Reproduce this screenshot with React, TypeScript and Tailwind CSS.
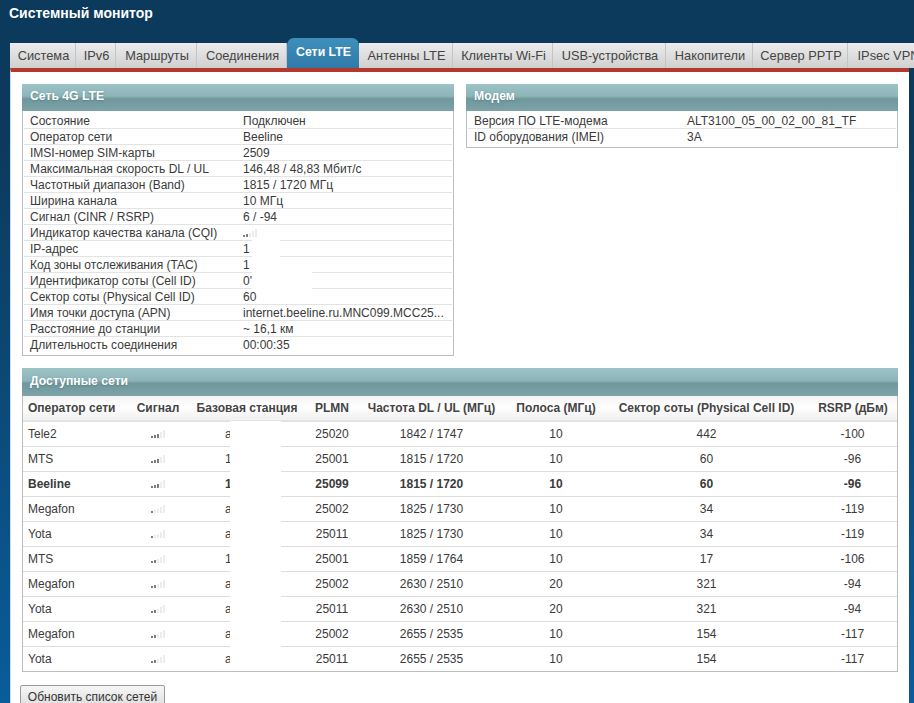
const tabs = [
  { label: "Система", width: "w-[66px]" },
  { label: "IPv6", width: "w-[40px]" },
  { label: "Маршруты", width: "w-[81px]" },
  { label: "Соединения", width: "w-[90px]" },
  { label: "Сети LTE", width: "w-[72px]", active: true },
  { label: "Антенны LTE", width: "w-[94px]" },
  { label: "Клиенты Wi-Fi", width: "w-[100px]" },
  { label: "USB-устройства", width: "w-[113px]" },
  { label: "Накопители", width: "w-[87px]" },
  { label: "Сервер PPTP", width: "w-[95px]" },
  { label: "IPsec VPN", width: "w-[80px]" },
];

const lteRows = [
  ["Состояние", "Подключен"],
  ["Оператор сети", "Beeline"],
  ["IMSI-номер SIM-карты", "2509"],
  ["Максимальная скорость DL / UL", "146,48 / 48,83 Мбит/с"],
  ["Частотный диапазон (Band)", "1815 / 1720 МГц"],
  ["Ширина канала", "10 МГц"],
  ["Сигнал (CINR / RSRP)", "6 / -94"],
  ["Индикатор качества канала (CQI)", "signal"],
  ["IP-адрес", "1"],
  ["Код зоны отслеживания (TAC)", "1"],
  ["Идентификатор соты (Cell ID)", "0'"],
  ["Сектор соты (Physical Cell ID)", "60"],
  ["Имя точки доступа (APN)", "internet.beeline.ru.MNC099.MCC25..."],
  ["Расстояние до станции", "~ 16,1 км"],
  ["Длительность соединения", "00:00:35"],
];

const networks = [
  ["Tele2", 3, "a", "25020", "1842 / 1747", "10", "442", "-100"],
  ["MTS", 3, "1", "25001", "1815 / 1720", "10", "60", "-96"],
  ["Beeline", 3, "1", "25099", "1815 / 1720", "10", "60", "-96"],
  ["Megafon", 1, "a", "25002", "1825 / 1730", "10", "34", "-119"],
  ["Yota", 1, "a", "25011", "1825 / 1730", "10", "34", "-119"],
  ["MTS", 2, "1", "25001", "1859 / 1764", "10", "17", "-106"],
  ["Megafon", 2, "a", "25002", "2630 / 2510", "20", "321", "-94"],
  ["Yota", 2, "a", "25011", "2630 / 2510", "20", "321", "-94"],
  ["Megafon", 2, "a", "25002", "2655 / 2535", "10", "154", "-117"],
  ["Yota", 2, "a", "25011", "2655 / 2535", "10", "154", "-117"],
] as const;

const cardHeader =
  "h-[27px] flex items-center pl-[8px] pb-[2px] text-[12.2px] font-bold text-white [text-shadow:0_1px_2px_#5d8287] bg-[linear-gradient(#9cc4c7_0%,#8db5b9_45%,#6f979c_55%,#7da3a8_100%)]";

function SignalBars({ level }: { level: number }) {
  const heights = [2, 3, 4, 6, 8];
  return (
    <svg width="15" height="8" viewBox="0 0 15 8" className="block">
      {heights.map((h, i) => (
        <rect key={i} x={i * 3} y={8 - h} width="2" height={h} fill={i < level ? "#7d7d7d" : "#e8eded"} />
      ))}
    </svg>
  );
}

function InfoRow({ label, value, last }: { label: string; value: string; last: boolean }) {
  return (
    <div className={`h-[16px] mx-[1px] flex items-center pl-[6px] leading-[16px] ${last ? "" : "border-b border-[#e3e3e3]"}`}>
      <span className="w-[213px]">{label}</span>
      {value === "signal" ? <SignalBars level={2} /> : <span>{value}</span>}
    </div>
  );
}

export default function App() {
  return (
    <div className="h-[703px] overflow-hidden bg-[linear-gradient(#0c3a5c_0%,#0c3a5c_20%,#0a5c9a_100%)] font-['Liberation_Sans',Arial,sans-serif] text-[12px] text-[#3a3a3a]">
      <div className="h-[38px] pl-[9px] pt-[5px] text-[14px] leading-[17px] font-bold text-white">Системный монитор</div>

      <div className="ml-[10px] h-[30px] flex items-end">
        {tabs.map((tab) =>
          tab.active ? (
            <div
              key={tab.label}
              className={`${tab.width} h-[30px] shrink-0 flex items-center justify-center rounded-t-[7px] pb-[2px] pl-[1px] text-[12.3px] font-bold text-white bg-[linear-gradient(#3f8fbd,#2f7aa8)]`}
            >
              {tab.label}
            </div>
          ) : (
            <div
              key={tab.label}
              className={`${tab.width} h-[25px] shrink-0 flex items-center justify-center pl-[2px] border-r border-[#c4c4c4] text-[12.8px] text-[#444444] bg-[linear-gradient(#ececec,#d0d0d0)] whitespace-nowrap`}
            >
              {tab.label}
            </div>
          ),
        )}
      </div>

      <div className="mr-[5px] ml-[10px] h-[640px] border-t-[4px] border-l-[1px] border-t-[#b5382d] border-l-[#c8dcec] bg-white pt-[12px] pl-[11px]">
        <div className="flex gap-[12px]">
          <div className="relative w-[432px] h-[272px] border border-[#bdbdbd] border-t-0">
            <div className={`${cardHeader} -mx-[1px] mb-[2px]`}>Сеть 4G LTE</div>
            {lteRows.map(([label, value], i) => (
              <InfoRow key={label} label={label} value={value} last={i === lteRows.length - 1} />
            ))}
            {/* redacted values */}
            <div className="absolute left-[229px] top-[156px] h-[18px] w-[28px] bg-white" />
            <div className="absolute left-[229px] top-[174px] h-[34px] w-[60px] bg-white" />
          </div>
          <div className="w-[432px] h-[64px] border border-[#bdbdbd] border-t-0">
            <div className={`${cardHeader} -mx-[1px] mb-[2px]`}>Модем</div>
            <InfoRow label="Версия ПО LTE-модема" value="ALT3100_05_00_02_00_81_TF" last={false} />
            <InfoRow label="ID оборудования (IMEI)" value="3A" last />
          </div>
        </div>

        <div className="relative mt-[12px] w-[876px] border border-[#bdbdbd] border-t-0">
          <div className={`${cardHeader} -mx-[1px] h-[28px]`}>Доступные сети</div>
          <table className="w-[874px] table-fixed border-collapse">
            <thead>
              <tr className="h-[25px] font-bold text-[#444444] bg-[linear-gradient(#f4f4f4,#ffffff_50%,#f0f0f0)] border-b-[2px] border-[#e2e2e2]">
                <th className="w-[105px] pl-[5px] text-left">Оператор сети</th>
                <th className="w-[60px]">Сигнал</th>
                <th className="w-[118px]">Базовая станция</th>
                <th className="w-[52px]">PLMN</th>
                <th className="w-[147px]">Частота DL / UL (МГц)</th>
                <th className="w-[102px]">Полоса (МГц)</th>
                <th className="w-[199px]">Сектор соты (Physical Cell ID)</th>
                <th className="pl-[3px]">RSRP (дБм)</th>
              </tr>
            </thead>
            <tbody>
              {networks.map((row, i) => (
                <tr
                  key={i}
                  className={`h-[25px] text-center ${i < networks.length - 1 ? "border-b border-[#dddddd]" : ""} ${row[0] === "Beeline" ? "font-bold" : ""}`}
                >
                  <td className="pl-[5px] text-left">{row[0]}</td>
                  <td>
                    <div className="flex justify-center">
                      <SignalBars level={row[1]} />
                    </div>
                  </td>
                  <td className="pl-[37px] text-left">{row[2]}</td>
                  <td>{row[3]}</td>
                  <td>{row[4]}</td>
                  <td>{row[5]}</td>
                  <td>{row[6]}</td>
                  <td className="pl-[2px]">{row[7]}</td>
                </tr>
              ))}
            </tbody>
          </table>
          {/* redacted station ids */}
          <div className="absolute left-[207px] top-[53px] bottom-0 w-[51px] bg-white" />
        </div>

        <button className="mt-[13px] -ml-[2px] h-[24px] w-[145px] rounded-[2px] border border-[#9a9a9a] text-[#333333] bg-[linear-gradient(#f6f6f6,#dcdcdc)]">
          Обновить список сетей
        </button>
      </div>
    </div>
  );
}
